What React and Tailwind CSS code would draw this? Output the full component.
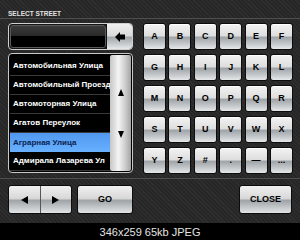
import React from 'react'

const rows = [
	['A', 'B', 'C', 'D', 'E', 'F'],
	['G', 'H', 'I', 'J', 'K', 'L'],
	['M', 'N', 'O', 'P', 'Q', 'R'],
	['S', 'T', 'U', 'V', 'W', 'X'],
	['Y', 'Z', '#', '.', '—', '...'],
]

const streets = [
	'Автомобильная Улица',
	'Автомобильный Проезд',
	'Автомоторная Улица',
	'Агатов Переулок',
	'Аграрная Улица',
	'Адмирала Лазарева Ул',
]

function Key({ label }) {
	return (
		<div className="flex items-center justify-center rounded-[3px] border border-[#0c0c0c] bg-[linear-gradient(to_bottom,#f3f3f3_0%,#dedede_46%,#a0a5a9_54%,#c2c6c9_78%,#e6e8e9_100%)] shadow-[inset_0_1px_0_#ffffff] text-[9px] font-bold text-black">
			{label}
		</div>
	)
}

function Tri({ dir }) {
	const pts = {
		up: '0,7 3,0 6,7',
		down: '0,0 6,0 3,7',
		left: '7,0 7,8 0,4',
		right: '0,0 0,8 7,4',
	}
	const w = dir === 'up' || dir === 'down' ? 6 : 7
	const h = dir === 'up' || dir === 'down' ? 7 : 8
	return (
		<svg width={w} height={h} viewBox={`0 0 ${w} ${h}`}>
			<polygon points={pts[dir]} fill="#000" />
		</svg>
	)
}

export default function App() {
	return (
		<div className="w-[300px] h-[240px] flex flex-col overflow-hidden font-['Liberation_Sans',Arial,sans-serif]">
			<div className="h-[223px] flex flex-col bg-[repeating-linear-gradient(45deg,#2f2f2f_0px,#2f2f2f_1px,#272727_1px,#272727_3px)]">
				<div className="h-[19px] border-b border-[#4e4e4e] pl-[8px] flex items-end pb-[1px]">
					<span className="text-[6.5px] font-bold text-[#e2e2e2] leading-none">SELECT STREET</span>
				</div>

				<div className="flex pl-[8px] pt-[4px] gap-[10px]">
					<div className="w-[125px] flex flex-col gap-[3px]">
						<div className="h-[27px] flex rounded-[4px] border border-[#cfcfcf] bg-[#141414] overflow-hidden">
							<div className="flex-1 m-[1px] rounded-[3px] border border-[#5a5a5a] bg-[linear-gradient(to_bottom,#3a3a3a_0%,#2a2a2a_45%,#000_50%,#000_100%)]"></div>
							<div className="w-[25px] flex items-center justify-center bg-[linear-gradient(to_bottom,#f0f0f0_0%,#dadada_46%,#a3a8ac_54%,#c4c8cb_78%,#e6e8e9_100%)]">
								<svg width="10" height="10" viewBox="0 0 10 10">
									<path d="M0 5 L5 0 L5 2.5 L10 2.5 L10 7.5 L5 7.5 L5 10 Z" fill="#000" />
								</svg>
							</div>
						</div>

						<div className="h-[120px] flex rounded-[4px] border border-[#c8c8c8] bg-black p-[1px] overflow-hidden">
							<div className="flex-1 flex flex-col pt-[2px] overflow-hidden">
								{streets.map((s, i) => (
									<div
										key={i}
										className={
											i === 4
												? 'h-[19px] flex items-center pl-[3px] bg-[linear-gradient(to_bottom,#4f98ee,#68b0ff)] text-[#0c2350] text-[8px] font-bold whitespace-nowrap'
												: 'h-[19px] flex items-center pl-[3px] border-b border-[#3a3a3a] text-white text-[8px] font-bold whitespace-nowrap'
										}
									>
										{s}
									</div>
								))}
							</div>
							<div className="w-[21px] rounded-[2px] flex flex-col items-center justify-around py-[16px] bg-[linear-gradient(to_right,#c6c6c6_0%,#f4f4f4_40%,#d0d0d0_70%,#a4a4a4_100%)]">
								<Tri dir="up" />
								<Tri dir="down" />
							</div>
						</div>
					</div>

					<div className="w-[150px] grid grid-cols-6 gap-x-[2.4px] gap-y-[4px] auto-rows-[27px]">
						{rows.flat().map((k, i) => (
							<Key key={i} label={k} />
						))}
					</div>
				</div>

				<div className="mt-[4px] border-t border-[#4e4e4e]"></div>

				<div className="mt-[6px] h-[29px] flex pl-[8px] pr-[8px]">
					<div className="w-[64px] flex rounded-[3px] border border-[#0c0c0c] overflow-hidden bg-[linear-gradient(to_bottom,#f0f0f0_0%,#d8d8d8_46%,#9fa4a8_54%,#c2c6c9_78%,#e2e4e5_100%)]">
						<div className="flex-1 flex items-center justify-center border-r border-[#555]">
							<Tri dir="left" />
						</div>
						<div className="flex-1 flex items-center justify-center">
							<Tri dir="right" />
						</div>
					</div>
					<div className="ml-[5px] w-[56px] flex items-center justify-center rounded-[3px] border border-[#0c0c0c] bg-[linear-gradient(to_bottom,#f0f0f0_0%,#d8d8d8_46%,#9fa4a8_54%,#c2c6c9_78%,#e2e4e5_100%)] text-[9px] font-bold text-black">
						GO
					</div>
					<div className="ml-auto w-[53px] flex items-center justify-center rounded-[3px] border border-[#0c0c0c] bg-[linear-gradient(to_bottom,#f0f0f0_0%,#d8d8d8_46%,#9fa4a8_54%,#c2c6c9_78%,#e2e4e5_100%)] text-[9px] font-bold text-black">
						CLOSE
					</div>
				</div>
			</div>
			<div className="h-[17px] bg-black flex items-center justify-center text-[11px] text-[#e4e4e4] leading-none pt-[1px]">
				346x259 65kb JPEG
			</div>
		</div>
	)
}
